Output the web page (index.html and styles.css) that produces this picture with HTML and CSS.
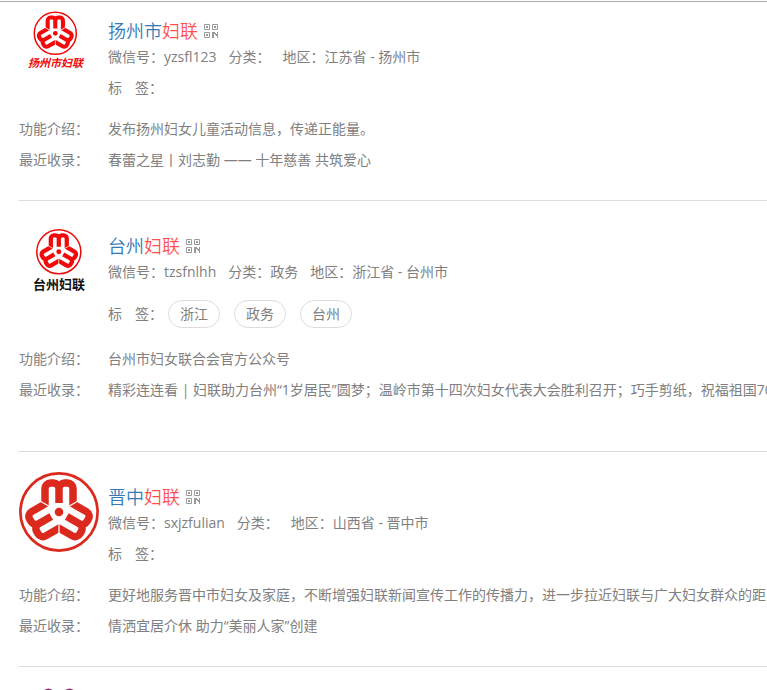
FILE: index.html
```html
<!DOCTYPE html>
<html lang="zh-CN">
<head>
<meta charset="utf-8">
<title>妇联公众号</title>
<link rel="stylesheet" href="styles.css">
</head>
<body>
<svg class="defs" aria-hidden="true">
  <defs>
    <clipPath id="wedge"><path d="M40 39.3L0 16.2V0H80V16.2Z"/></clipPath>
    <g id="petal" clip-path="url(#wedge)">
      <path d="M26 34V16.500a5.500 5.500 0 0 1 5.500-5.500h3a5.500 5.500 0 0 1 5.500 5.500V31M40 16.500a5.500 5.500 0 0 1 5.500-5.500h3a5.500 5.500 0 0 1 5.500 5.500V34" fill="none" stroke="currentColor" stroke-width="7.500"/>
    </g>
    <g id="emblem">
      <circle cx="40" cy="40" r="38.6" fill="none" stroke="currentColor" stroke-width="2.700"/>
      <use href="#petal"/>
      <use href="#petal" transform="rotate(120 40 40)"/>
      <use href="#petal" transform="rotate(240 40 40)"/>
      <circle cx="40" cy="40" r="4.300" fill="currentColor"/>
    </g>
    <symbol id="qr" viewBox="0 0 14 14">
      <path d="M.5.5h5v5h-5zM8.500.5h5v5h-5zM.5 8.500h5v5h-5z" fill="none" stroke="currentColor"/>
      <path d="M2 2h2v2H2zM10 2h2v2h-2zM2 10h2v2H2zM8 8h3v1h1v1h1V8h1v6h-1v-2h-1v-1h-1v-1h-1v4H8z" fill="currentColor"/>
    </symbol>
  </defs>
</svg>
<ul class="accounts">
  <li class="account">
    <div class="head">
      <svg class="logo bright" viewBox="0 0 80 80" role="img" aria-label="扬州市妇联">
        <use href="#emblem" transform="translate(14.500 5.500) scale(.545)"/>
        <text class="brush" x="9" y="61">扬州市妇联</text>
      </svg>
      <div class="info">
        <h2><a href="#">扬州市<em>妇联</em></a><svg class="qr"><use href="#qr"/></svg></h2>
        <p class="meta"><span>微信号：yzsfl123</span><span>分类：</span><span>地区：江苏省 - 扬州市</span></p>
        <div class="tags"><span class="tag-label"><span>标</span><span>签：</span></span></div>
      </div>
    </div>
    <dl>
      <dt>功能介绍：</dt><dd>发布扬州妇女儿童活动信息，传递正能量。</dd>
      <dt>最近收录：</dt><dd>春蕾之星丨刘志勤 —— 十年慈善 共筑爱心</dd>
    </dl>
  </li>
  <li class="account tagged">
    <div class="head">
      <svg class="logo bright" viewBox="0 0 80 80" role="img" aria-label="台州妇联">
        <use href="#emblem" transform="translate(17 8) scale(.57)"/>
        <text class="plain" x="14" y="68">台州妇联</text>
      </svg>
      <div class="info">
        <h2><a href="#">台州<em>妇联</em></a><svg class="qr"><use href="#qr"/></svg></h2>
        <p class="meta"><span>微信号：tzsfnlhh</span><span>分类：政务</span><span>地区：浙江省 - 台州市</span></p>
        <div class="tags"><span class="tag-label"><span>标</span><span>签：</span></span><a class="tag" href="#">浙江</a><a class="tag" href="#">政务</a><a class="tag" href="#">台州</a></div>
      </div>
    </div>
    <dl>
      <dt>功能介绍：</dt><dd>台州市妇女联合会官方公众号</dd>
      <dt>最近收录：</dt><dd>精彩连连看 | 妇联助力台州“1岁居民”圆梦；温岭市第十四次妇女代表大会胜利召开；巧手剪纸，祝福祖国70</dd>
    </dl>
  </li>
  <li class="account">
    <div class="head">
      <svg class="logo" viewBox="0 0 80 80" role="img" aria-label="晋中妇联"><use href="#emblem"/></svg>
      <div class="info">
        <h2><a href="#">晋中<em>妇联</em></a><svg class="qr"><use href="#qr"/></svg></h2>
        <p class="meta"><span>微信号：sxjzfulian</span><span>分类：</span><span>地区：山西省 - 晋中市</span></p>
        <div class="tags"><span class="tag-label"><span>标</span><span>签：</span></span></div>
      </div>
    </div>
    <dl>
      <dt>功能介绍：</dt><dd>更好地服务晋中市妇女及家庭，不断增强妇联新闻宣传工作的传播力，进一步拉近妇联与广大妇女群众的距</dd>
      <dt>最近收录：</dt><dd>情洒宜居介休 助力“美丽人家”创建</dd>
    </dl>
  </li>
  <li class="account next">
    <svg class="logo-top" viewBox="0 0 80 3" aria-hidden="true"><circle cx="29.500" cy="8" r="6.500"/><circle cx="50.500" cy="8" r="6.500"/></svg>
  </li>
</ul>
</body>
</html>
```

FILE: styles.css
```css
* { box-sizing: border-box; }

body {
  margin: 0;
  padding-top: 1px;
  background: #fff;
  color: #808080;
  font: 14px/20px "Open Sans", "Noto Sans CJK SC", sans-serif;
}

.defs { position: absolute; width: 0; height: 0; }

a { color: #337ab7; text-decoration: none; }
h2, p, dl, dd, ul { margin: 0; padding: 0; }

.accounts {
  list-style: none;
  border-top: 1px solid #aaa;
}

.account {
  margin-left: 19px;
  padding: 20px 0 25px;
  border-bottom: 1px solid #ddd;
}

.account:first-child { padding-top: 4px; }
.account.tagged { padding-bottom: 46px; }
.account.next { padding-bottom: 0; border-bottom: 0; }

.head { display: flex; gap: 9px; }

.logo {
  flex: none;
  width: 80px;
  height: 80px;
  color: #dc291e;
}
.logo.bright { color: #f00a0a; }

.logo text { font-family: "Noto Sans CJK SC", sans-serif; font-weight: 700; }
.brush { font-size: 11px; font-style: italic; fill: #f00a0a; }
.plain { font-size: 13px; fill: #111; }

.logo-top { display: block; width: 80px; height: 3px; fill: #8a3a68; }

.info { flex: 1; min-width: 0; padding-top: 12px; }

h2 {
  display: flex;
  align-items: center;
  gap: 6px;
  font-size: 18px;
  font-weight: 350;
  line-height: 26px;
}
h2 em { color: #ff4f4f; font-style: normal; }
.qr { width: 14px; height: 14px; color: #999; }

.meta { display: flex; gap: 12px; line-height: 26px; white-space: nowrap; }

.tags { display: flex; align-items: center; gap: 14px; line-height: 36px; }
.tag-label { display: flex; gap: 13px; margin-right: -9px; }
.tagged .tags { padding: 15px 0 8px; line-height: 28px; }

.tag {
  padding: 0 11px;
  border: 1px solid #ddd;
  border-radius: 14px;
  color: #808080;
  line-height: 26px;
}

dl {
  display: grid;
  grid-template-columns: 89px minmax(0, 1fr);
  padding-top: 7px;
  line-height: 31px;
  white-space: nowrap;
}
dd { overflow: hidden; }
```
